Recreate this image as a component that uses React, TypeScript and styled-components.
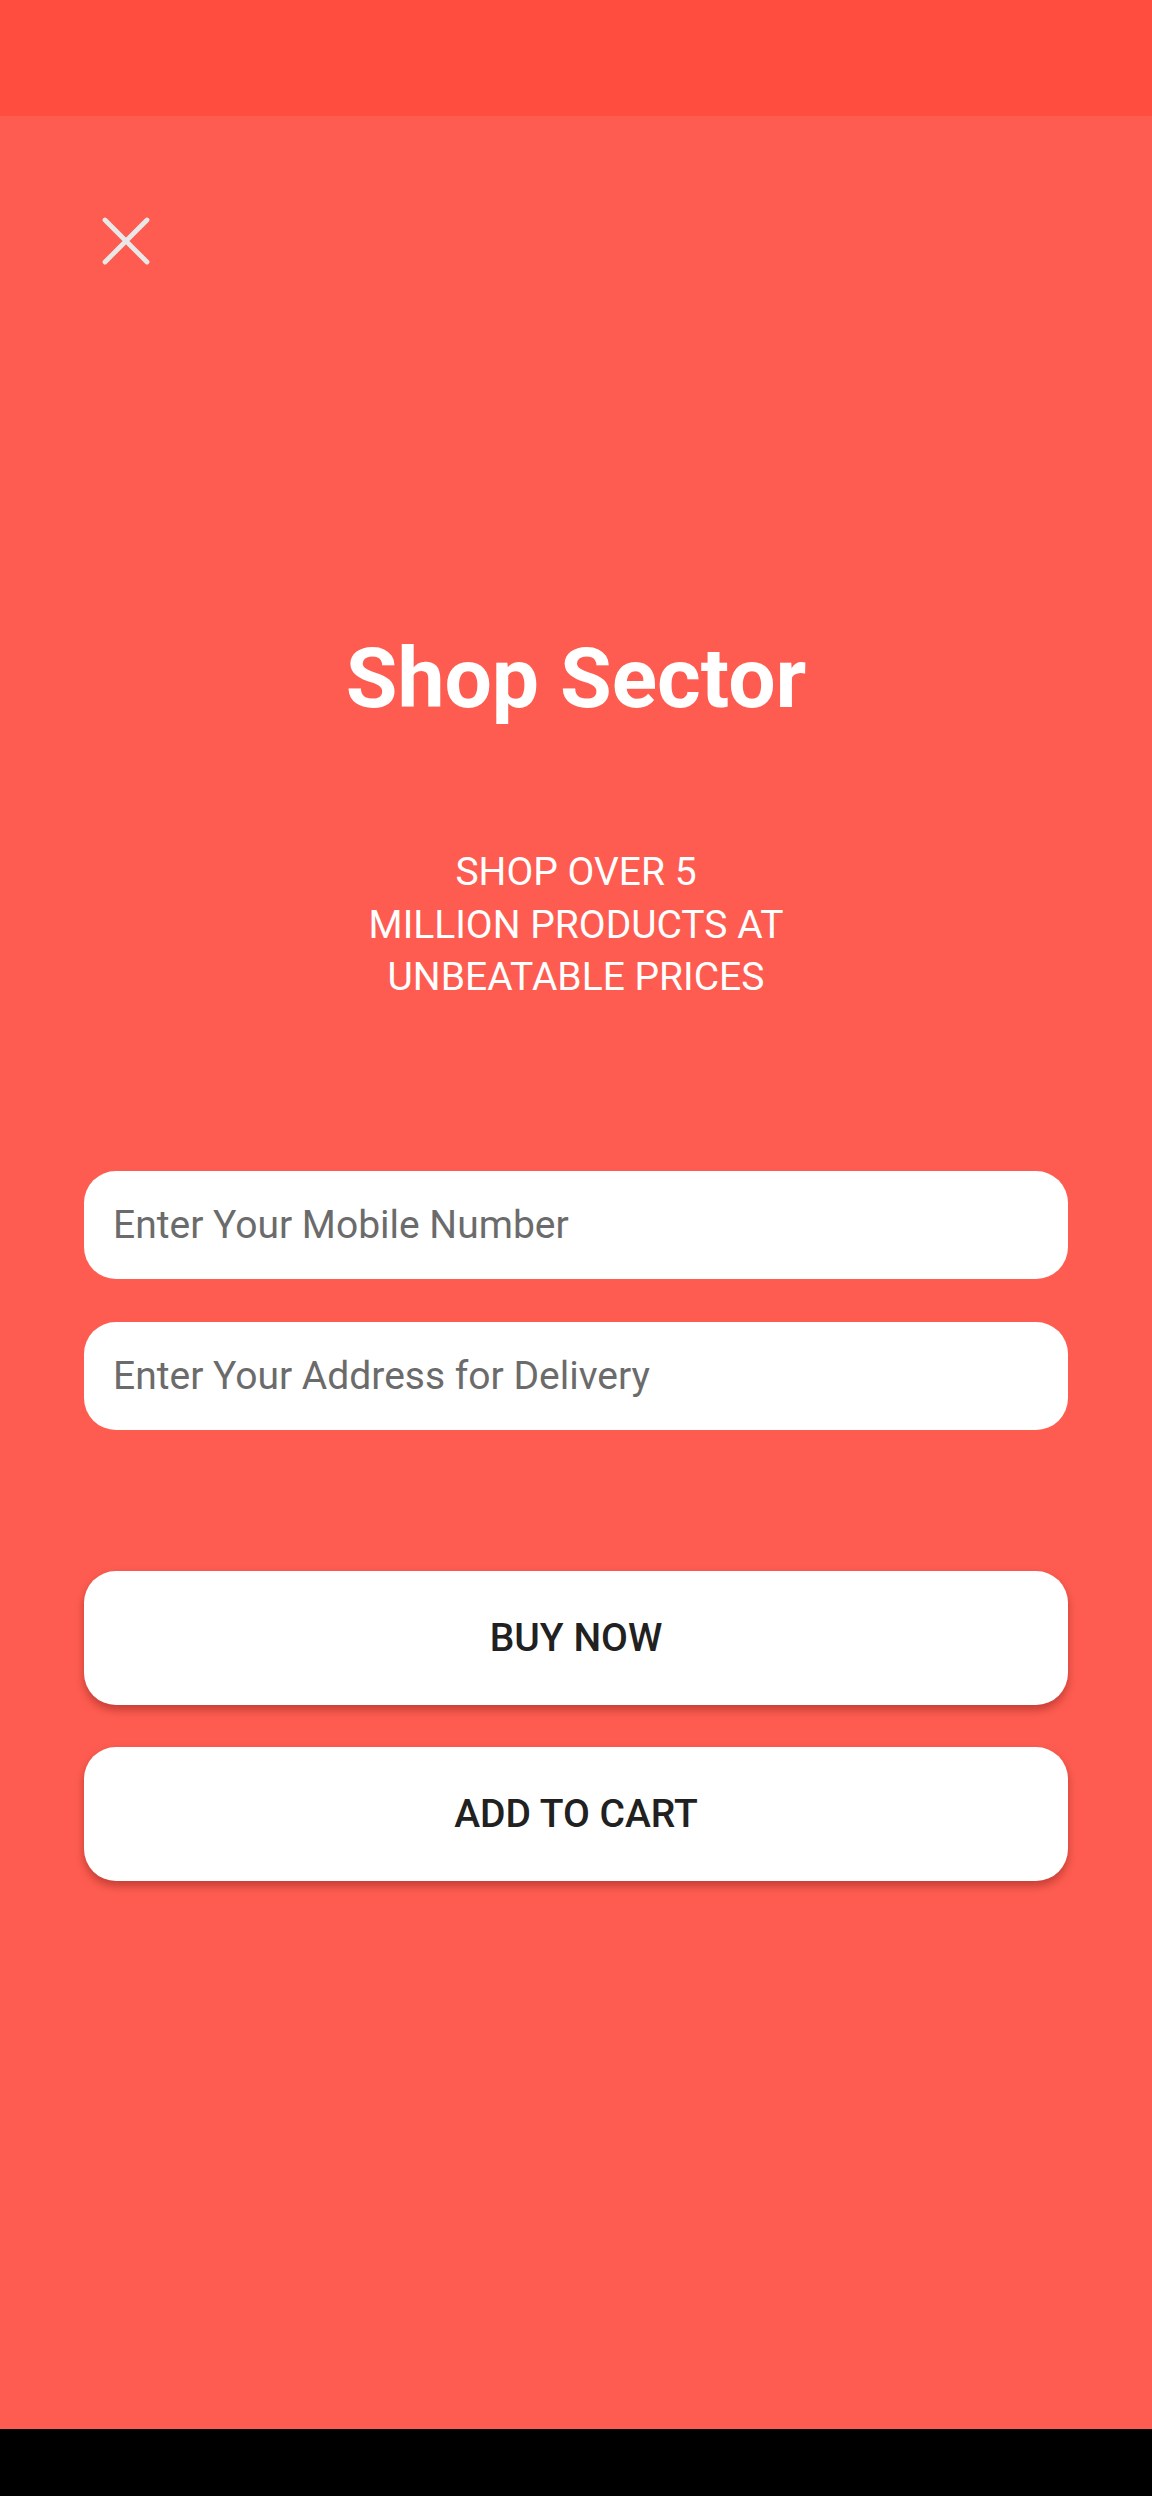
import React from "react";
import styled, { createGlobalStyle } from "styled-components";

const GlobalStyle = createGlobalStyle`
  html, body {
    margin: 0;
    padding: 0;
    background: #000;
  }
  body {
    font-family: Roboto, "Noto Sans", "Liberation Sans", sans-serif;
  }
  * { box-sizing: border-box; }
`;

const Screen = styled.div`
  width: 1152px;
  height: 2496px;
  display: flex;
  flex-direction: column;
  overflow: hidden;
`;

const StatusBar = styled.div`
  height: 116px;
  flex: none;
  background: #ff4d3f;
`;

const Main = styled.main`
  flex: 1;
  background: #fe5c50;
  display: flex;
  flex-direction: column;
  padding: 0 84px;
`;

const NavBar = styled.div`
  height: 67px;
  flex: none;
  background: #000;
`;

const Header = styled.div`
  display: flex;
  padding-top: 101px;
  padding-left: 18px;
`;

const CloseButton = styled.button`
  width: 48px;
  height: 48px;
  padding: 0;
  border: none;
  background: transparent;
  display: flex;
  align-items: center;
  justify-content: center;
  cursor: pointer;
`;

const Title = styled.h1`
  margin: 364px 0 0;
  font-family: Roboto, "Liberation Sans", sans-serif;
  font-weight: 700;
  font-size: 84px;
  line-height: 100px;
  color: #ffffff;
  text-align: center;
`;

const Tagline = styled.p`
  margin: 117px 0 0;
  font-family: Roboto, "Liberation Sans", sans-serif;
  font-weight: 400;
  font-size: 39px;
  line-height: 52.5px;
  color: #ffffff;
  text-align: center;
`;

const Form = styled.form`
  margin-top: 167px;
  display: flex;
  flex-direction: column;
  gap: 43px;
`;

const Field = styled.input`
  height: 108px;
  width: 100%;
  border: none;
  outline: none;
  border-radius: 32px;
  background: #ffffff;
  padding: 0 29px;
  font-family: Roboto, "Liberation Sans", sans-serif;
  font-size: 39px;
  color: #222;
  &::placeholder {
    color: #6b6b6b;
    opacity: 1;
  }
`;

const Actions = styled.div`
  margin-top: 141px;
  display: flex;
  flex-direction: column;
  gap: 42px;
`;

const ActionButton = styled.button`
  height: 134px;
  width: 100%;
  border: none;
  border-radius: 32px;
  background: #ffffff;
  box-shadow: 0 5px 9px rgba(90, 10, 0, 0.35);
  font-family: Roboto, "Liberation Sans", sans-serif;
  font-weight: 500;
  font-size: 39px;
  color: #212121;
  text-transform: uppercase;
  cursor: pointer;
`;

const CloseIcon = () => (
  <svg width="48" height="48" viewBox="0 0 48 48" fill="none">
    <path
      d="M3 3 L45 45 M45 3 L3 45"
      stroke="#e8e8e8"
      strokeWidth="4.8"
      strokeLinecap="round"
    />
  </svg>
);

export default function App() {
  return (
    <>
      <GlobalStyle />
      <Screen>
        <StatusBar />
        <Main>
          <Header>
            <CloseButton aria-label="Close">
              <CloseIcon />
            </CloseButton>
          </Header>
          <Title>Shop Sector</Title>
          <Tagline>
            SHOP OVER 5
            <br />
            MILLION PRODUCTS AT
            <br />
            UNBEATABLE PRICES
          </Tagline>
          <Form onSubmit={(e) => e.preventDefault()}>
            <Field type="tel" placeholder="Enter Your Mobile Number" />
            <Field type="text" placeholder="Enter Your Address for Delivery" />
          </Form>
          <Actions>
            <ActionButton type="button">Buy Now</ActionButton>
            <ActionButton type="button">Add to Cart</ActionButton>
          </Actions>
        </Main>
        <NavBar />
      </Screen>
    </>
  );
}
